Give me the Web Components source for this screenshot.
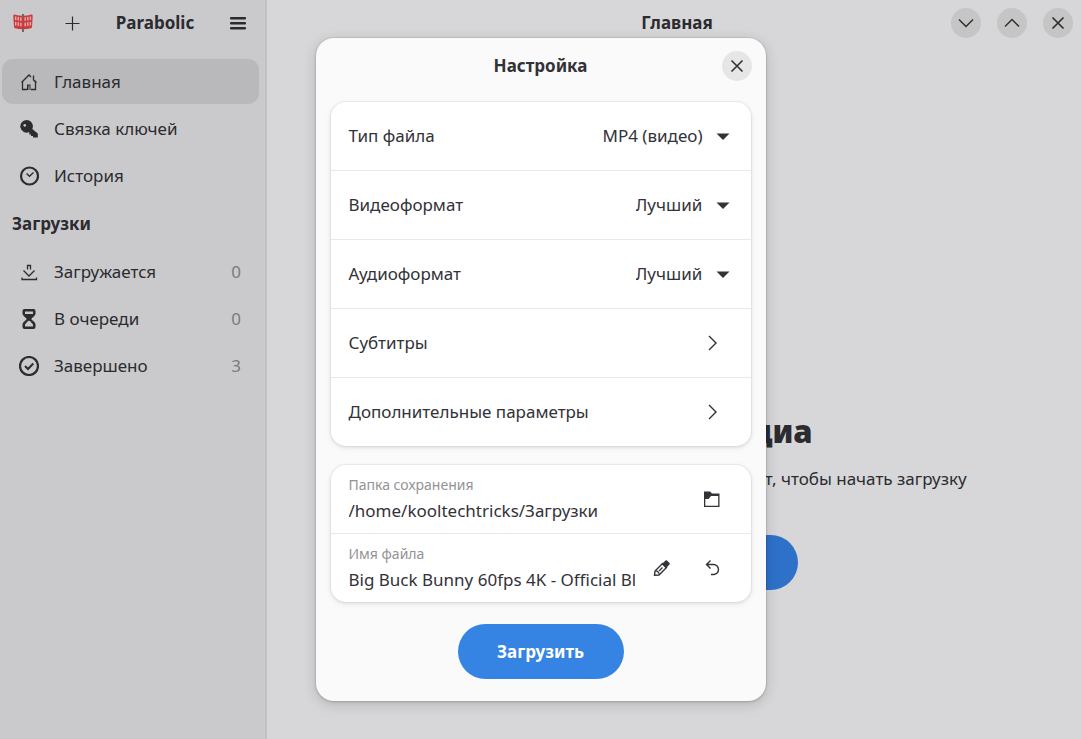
<!DOCTYPE html>
<html lang="ru">
<head>
<meta charset="utf-8">
<meta name="viewport" content="width=device-width, initial-scale=1">
<title>Parabolic</title>
<style>
  html, body { height: 100%; }
  body {
    margin: 0;
    overflow: hidden;
    font: 17px/24px "Noto Sans", sans-serif;
    color: #2b2b30;
    background: #d7d7d9;
    --accent: #3584e4;
  }
</style>
</head>
<body>
<pb-window>
  <pb-sidebar slot="sidebar">
    <pb-nav-item icon="home" label="Главная" current></pb-nav-item>
    <pb-nav-item icon="key" label="Связка ключей"></pb-nav-item>
    <pb-nav-item icon="clock" label="История"></pb-nav-item>
    <pb-nav-item slot="downloads" icon="download" label="Загружается" count="0"></pb-nav-item>
    <pb-nav-item slot="downloads" icon="hourglass" label="В очереди" count="0"></pb-nav-item>
    <pb-nav-item slot="downloads" icon="done" label="Завершено" count="3"></pb-nav-item>
  </pb-sidebar>
  <pb-home>
    <span slot="title">Загрузить медиа</span>
    <span slot="description">Добавьте ссылку на видео, аудио или плейлист, чтобы начать загрузку</span>
  </pb-home>
  <pb-dialog slot="dialog" heading="Настройка">
    <pb-card>
      <pb-select-row label="Тип файла" value="MP4 (видео)"></pb-select-row>
      <pb-select-row label="Видеоформат" value="Лучший"></pb-select-row>
      <pb-select-row label="Аудиоформат" value="Лучший"></pb-select-row>
      <pb-link-row>Субтитры</pb-link-row>
      <pb-link-row>Дополнительные параметры</pb-link-row>
    </pb-card>
    <pb-card>
      <pb-entry-row label="Папка сохранения" value="/home/kooltechtricks/Загрузки">
        <pb-icon-button icon="folder" label="Выбрать папку"></pb-icon-button>
      </pb-entry-row>
      <pb-entry-row label="Имя файла" value="Big Buck Bunny 60fps 4K - Official Blender Foundation Short Film">
        <pb-icon-button icon="edit" label="Изменить"></pb-icon-button>
        <pb-icon-button icon="undo" label="Вернуть"></pb-icon-button>
      </pb-entry-row>
    </pb-card>
    <pb-pill slot="action">Загрузить</pb-pill>
  </pb-dialog>
</pb-window>

<script>
const CELLS = [2, 4.6, 7.2, 11.5, 14.1, 16.7].map(x => {
  const drop = 1.4 - Math.abs(x + 0.8 - 10) * 0.15;
  return `<rect x="${x}" y="${3.2 + drop}" width="1.400" height="3.600"/><rect x="${x}" y="${8.6 + drop}" width="1.400" height="3.600"/>`;
}).join('');
const LOGO = `
  <path d="M10 1V19" stroke="#6b6b6d" stroke-width="2"/>
  <path d="M1.500 1.600Q10 4 18.500 1.600Q19.700 1.600 19.700 3L19 14Q19 15 18 15.200Q10 17.500 2 15.200Q1 15 1 14L.3 3Q.3 1.600 1.500 1.600Z" fill="#d0383a"/>
  <g fill="#d6b4b6">${CELLS}</g>
  <path d="M10 1V5M10 15.500V19" stroke="#6b6b6d" stroke-width="1.600"/>`;

/* Every glyph sits on a 20 by 20 grid. */
const ICONS = {
  logo: LOGO,
  plus: '<path d="M10.500 3.500V17.500M3.500 10.500H17.500" stroke="currentColor" stroke-width="1.200"/>',
  menu: '<path d="M3.200 5.200H16.800M3.200 10.200H16.800M3.200 15.200H16.800" stroke="currentColor" stroke-width="2.600" stroke-linecap="round"/>',
  home: '<path d="M2.500 10.500L10 3L12 5M3.500 9.500V17.500H8M12 17.500H16.500V9.500L17.500 10.500M14.500 3.500V8L16.500 10" fill="none" stroke="currentColor" stroke-width="1.300"/><path d="M8 12.500H11.500V18H10.500V13.500H9.500V18H8Z" fill="currentColor"/>',
  key: '<path fill-rule="evenodd" d="M7.500 1A6.300 6.300 0 1 0 10.300 13V15.500H12V17H14V18.500H18.800V14.500L13.300 10A6.300 6.300 0 0 0 7.500 1ZM5.800 5A1.400 1.400 0 1 1 5.700 5Z" fill="currentColor"/>',
  clock: '<circle cx="10.500" cy="10" r="8.500" fill="none" stroke="currentColor" stroke-width="2.200"/><path d="M7.500 7.500L10.500 10.300L14.500 6.500" fill="none" stroke="currentColor" stroke-width="1.300"/>',
  download: '<path d="M8.500 7.500V3.500H11.500V7.500M4.500 8.500L10 14L15.500 8.500M3 15.500V17.500H17.500V15.500" fill="none" stroke="currentColor" stroke-width="1.300"/>',
  hourglass: '<path fill-rule="evenodd" d="M5.500 0H14.500Q16.500 0 16.500 2V5Q16 7 12.500 9.500V10.500Q16 13 16.500 15V18Q16.500 20 14.500 20H5.500Q3.500 20 3.500 18V15Q4 13 7.500 10.500V9.500Q4 7 3.500 5V2Q3.500 0 5.500 0ZM6 2.500V5H14V2.500ZM6 17.500H14V15.500L11.500 12.500Q10 11 8.500 12.500L6 15.500Z" fill="currentColor"/>',
  done: '<circle cx="10" cy="10" r="9" fill="none" stroke="currentColor" stroke-width="2.200"/><path d="M6 10L9 13L14.300 7.500" fill="none" stroke="currentColor" stroke-width="2"/>',
  down: '<path d="M3 6.500L10 13.500L17 6.500" fill="none" stroke="currentColor" stroke-width="1.400"/>',
  up: '<path d="M3 13.500L10 6.500L17 13.500" fill="none" stroke="currentColor" stroke-width="1.400"/>',
  close: '<path d="M4.500 4.500L15.500 15.500M15.500 4.500L4.500 15.500" fill="none" stroke="currentColor" stroke-width="1.600"/>',
  next: '<path d="M6 3L13 10L6 17" fill="none" stroke="currentColor" stroke-width="1.400"/>',
  arrow: '<path d="M3.500 7.500H16.500L10 14Z" fill="currentColor"/>',
  folder: '<path fill-rule="evenodd" d="M2 2.500H8L10 4.500H17.500V18H2ZM3.300 10V16.700H16.200V7H9L6.500 10Z" fill="currentColor"/>',
  edit: '<path d="M2.500 17.300L3 13L10.500 5.500L14.500 9.500L7 17Z" fill="none" stroke="currentColor" stroke-width="1.400"/><path d="M9.800 6.200L13.500 2.500Q14.300 2 15 2.500L17.500 5Q18 5.800 17.500 6.500L13.800 10.200Z" fill="currentColor"/><path d="M7 13L10.500 9.500" stroke="currentColor" stroke-width="1.300"/><path d="M3.500 12.800Q6.800 13 7.200 16.500" fill="none" stroke="currentColor" stroke-width="1.200"/>',
  undo: '<path d="M8.500 2.500L4.500 6.500L8.500 10.500M4.500 6.500H11.500A4.900 4.900 0 0 1 11.500 16.500H9" fill="none" stroke="currentColor" stroke-width="1.400"/>'
};

function define(name, css, html) {
  customElements.define(name, class extends HTMLElement {
    connectedCallback() {
      if (this.shadowRoot) return;
      const body = typeof html === 'function' ? html(this) : html;
      this.attachShadow({ mode: 'open' }).innerHTML = `<style>
        *, *::before { box-sizing: border-box; }
        button, input, select { font: inherit; color: inherit; border: 0; margin: 0; padding: 0; background: none; }
        ${css}</style>${body}`;
    }
  });
}
const attr = (el, name) => el.getAttribute(name) || '';

define('pb-icon', `
  :host { display: block; width: 20px; height: 20px; flex: none; }
  svg { display: block; width: 100%; height: 100%; }`,
  el => `<svg viewBox="0 0 20 20" aria-hidden="true">${ICONS[attr(el, 'name')]}</svg>`);

define('pb-icon-button', `
  :host { display: block; flex: none; }
  button { display: grid; place-items: center; width: 30px; height: 30px; border-radius: 50%; }
  :host([round]) button { background: var(--circle, #c5c5c6); }`,
  el => `<button type="button" aria-label="${attr(el, 'label')}"><pb-icon name="${attr(el, 'icon')}"></pb-icon></button>`);

define('pb-pill', `
  :host { display: block; }
  button { min-width: 166px; width: 100%; height: 55px; padding: 0 39px; border-radius: 28px;
    background: var(--pill, var(--accent)); color: #fff; font-weight: 700; }`,
  `<button type="button"><slot></slot></button>`);

define('pb-window', `
  :host { display: flex; min-height: 100%; height: 100%; position: relative; }
  main { flex: 1; min-width: 0; display: flex; }`,
  `<slot name="sidebar"></slot><main><slot></slot></main><slot name="dialog"></slot>`);

define('pb-sidebar', `
  :host { display: flex; flex-direction: column; flex: none; width: 267px; box-sizing: border-box;
    background: #cacacc; border-right: 2px solid #c1c1c4; }
  header { display: flex; align-items: center; gap: 19px; height: 46px; padding: 0 12px 0 8px; }
  h1 { flex: 1; margin: 0; text-align: center; font-size: 17px; line-height: 24px; white-space: nowrap; }
  nav { display: flex; flex-direction: column; gap: 2px; padding: 0 6px 0 2px; }
  nav:first-of-type { margin-top: 13px; }
  h2 { margin: 0; padding: 0 12px; font-size: 17px; line-height: 51px; }`,
  `<header>
    <pb-icon-button icon="logo" label="О программе"></pb-icon-button>
    <pb-icon-button icon="plus" label="Добавить"></pb-icon-button>
    <h1>Parabolic</h1>
    <pb-icon-button icon="menu" label="Меню"></pb-icon-button>
  </header>
  <nav><slot></slot></nav>
  <h2>Загрузки</h2>
  <nav><slot name="downloads"></slot></nav>`);

define('pb-nav-item', `
  :host { display: block; }
  a { display: flex; align-items: center; gap: 15px; height: 45px; padding: 0 18px 0 17px;
    border-radius: 11px; color: inherit; text-decoration: none; }
  :host([current]) a { background: #b9b9bb; }
  .label { flex: 1; }
  .count { color: #7b7b7e; }`,
  el => `<a href="#"${el.hasAttribute('current') ? ' aria-current="page"' : ''}>
    <pb-icon name="${attr(el, 'icon')}"></pb-icon><span class="label">${attr(el, 'label')}</span>
    ${el.hasAttribute('count') ? `<span class="count">${attr(el, 'count')}</span>` : ''}</a>`);

define('pb-home', `
  :host { flex: 1; display: flex; flex-direction: column; min-width: 0; --pill: #2d71c9; }
  header { display: grid; grid-template-columns: 1fr auto 1fr; align-items: center; height: 46px; padding: 0 8px 0 14px; }
  h2 { grid-column: 2; margin: 0; font-size: 17px; line-height: 24px; }
  .controls { display: flex; gap: 16px; justify-content: flex-end; }
  section { flex: 1; display: flex; flex-direction: column; align-items: center; justify-content: center; text-align: center; }
  section pb-icon { width: 180px; height: 180px; }
  h3 { margin: 34px 0 14px; font-size: 31px; line-height: 44px; font-weight: 900; white-space: nowrap; }
  p { margin: 0 0 44px; white-space: nowrap; }
  pb-pill { width: 248px; }`,
  `<header><h2>Главная</h2><div class="controls">
    <pb-icon-button round icon="down" label="Свернуть"></pb-icon-button>
    <pb-icon-button round icon="up" label="Развернуть"></pb-icon-button>
    <pb-icon-button round icon="close" label="Закрыть"></pb-icon-button>
  </div></header>
  <section>
    <pb-icon name="logo"></pb-icon>
    <h3><slot name="title"></slot></h3>
    <p><slot name="description"></slot></p>
    <pb-pill>Добавить</pb-pill>
  </section>`);

define('pb-dialog', `
  :host { position: absolute; inset: 0; display: flex; align-items: center; justify-content: center; }
  [role=dialog] { width: 450px; max-width: 100%; border-radius: 18px; background: #fafafa;
    box-shadow: 0 0 0 1px rgba(0,0,0,.05), 0 1px 3px rgba(0,0,0,.14), 0 3px 14px rgba(0,0,0,.16); color: #323237; }
  header { display: grid; grid-template-columns: 1fr auto 1fr; align-items: center; height: 56px; padding: 0 14px; }
  h2 { grid-column: 2; margin: 0; font-size: 17px; line-height: 24px; }
  header pb-icon-button { justify-self: end; --circle: #e6e6e6; }
  .body { display: flex; flex-direction: column; gap: 19px; padding: 8px 15px 0; }
  footer { display: flex; justify-content: center; padding: 22px 15px; }`,
  el => `<div role="dialog" aria-labelledby="heading">
    <header><h2 id="heading">${attr(el, 'heading')}</h2><pb-icon-button round icon="close" label="Закрыть"></pb-icon-button></header>
    <div class="body"><slot></slot></div>
    <footer><slot name="action"></slot></footer>
  </div>`);

define('pb-card', `
  :host { display: flex; flex-direction: column; gap: 1px; border-radius: 15px; overflow: hidden; background: #e9e9ea;
    box-shadow: 0 0 0 1px rgba(0,0,0,.03), 0 1px 3px 1px rgba(0,0,0,.07), 0 2px 6px 2px rgba(0,0,0,.03); }`,
  `<slot></slot>`);

define('pb-select-row', `
  :host { display: flex; align-items: center; height: 68px; padding: 0 18px; box-sizing: border-box; background: #fff; }
  label { flex: 1; }
  .field { display: grid; align-items: center; }
  select, pb-icon { grid-area: 1 / 1; }
  select { appearance: none; height: 34px; padding-right: 30px; }
  pb-icon { justify-self: end; pointer-events: none; }`,
  el => `<label for="choice">${attr(el, 'label')}</label>
    <span class="field"><select id="choice"><option>${attr(el, 'value')}</option></select><pb-icon name="arrow"></pb-icon></span>`);

define('pb-link-row', `
  :host { display: block; background: #fff; }
  button { display: flex; align-items: center; justify-content: space-between; width: 100%; height: 68px;
    padding: 0 28px 0 18px; text-align: left; }`,
  `<button type="button"><slot></slot><pb-icon name="next"></pb-icon></button>`);

define('pb-entry-row', `
  :host { display: flex; align-items: center; gap: 12px; height: 68px; padding: 0 24px 0 18px; box-sizing: border-box; background: #fff; }
  .text { flex: 1; min-width: 0; display: flex; flex-direction: column; gap: 2px; }
  label { font-size: 14px; line-height: 20px; color: #939396; }
  input { width: 100%; height: 26px; outline: 0; }
  .actions { display: flex; gap: 20px; }`,
  el => `<div class="text"><label for="entry">${attr(el, 'label')}</label>
    <input id="entry" type="text" value="${attr(el, 'value')}"></div>
    <div class="actions"><slot></slot></div>`);
</script>
</body>
</html>
